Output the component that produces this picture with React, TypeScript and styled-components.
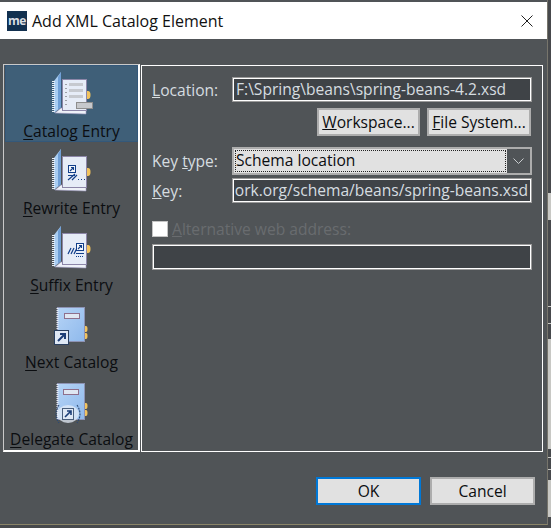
import React from "react";
import styled, { createGlobalStyle } from "styled-components";

const GlobalStyle = createGlobalStyle`
  html, body {
    margin: 0;
    padding: 0;
    background: #47494c;
  }
`;

const Frame = styled.div`
  width: 551px;
  height: 528px;
  overflow: hidden;
  display: flex;
  background: #47494c;
`;

const Backdrop = styled.div`
  width: 3px;
  flex: none;
  display: flex;
  flex-direction: column;
`;

const BackdropBand = styled.div<{ $h: number; $color: string }>`
  height: ${({ $h }) => $h}px;
  flex: none;
  background: ${({ $color }) => $color};
`;

const Window = styled.div`
  width: 548px;
  height: 525px;
  flex: none;
  box-sizing: border-box;
  display: flex;
  flex-direction: column;
  background: #505457;
  font-family: "Open Sans", "Noto Sans", sans-serif;
  font-size: 15.6px;
  border-right: 1px solid #77756c;
  border-bottom: 1px solid #8a8468;
`;

const TitleBar = styled.div`
  height: 37px;
  flex: none;
  margin-top: 2px;
  display: flex;
  align-items: center;
  background: #ffffff;
  padding: 0 0 0 7px;
  color: #111;
  font-size: 16px;
`;

const AppBadge = styled.div`
  width: 20px;
  height: 20px;
  background: #12304f;
  color: #d9dde2;
  font-size: 12px;
  font-weight: 700;
  line-height: 19px;
  text-align: center;
  letter-spacing: -0.5px;
`;

const Title = styled.div`
  margin-left: 5px;
  flex: 1;
`;

const CloseButton = styled.div`
  width: 41px;
  height: 37px;
  display: flex;
  align-items: center;
  justify-content: center;
`;

const Body = styled.div`
  flex: 1;
  display: flex;
  flex-direction: column;
  padding: 25px 4px 0 3px;
`;

const Panels = styled.div`
  display: flex;
  gap: 1px;
  height: 388px;
`;

const Sidebar = styled.div`
  width: 133px;
  border: 1px solid #c9c9c9;
  border-right: 2px solid #ffffff;
  border-bottom: 2px solid #ffffff;
  padding: 0 0 0 1px;
`;

const EntryItem = styled.div<{ $selected?: boolean }>`
  height: 77px;
  box-sizing: border-box;
  display: flex;
  flex-direction: column;
  align-items: center;
  padding-top: 5px;
  background: ${({ $selected }) => ($selected ? "#3f5f78" : "transparent")};
  box-shadow: ${({ $selected }) => ($selected ? "inset 0 0 0 1px #34587a" : "none")};
  color: #0b0d10;
  white-space: nowrap;
`;

const EntryLabel = styled.div`
  line-height: 20px;
  margin-top: 5px;
  u {
    text-underline-offset: 2px;
  }
`;

const Main = styled.div`
  flex: 1;
  margin-top: 1px;
  border: 1px solid #ffffff;
  padding: 11px 11px 0 10px;
  display: flex;
  flex-direction: column;
  color: #d6dde0;
`;

const FieldRow = styled.div`
  display: grid;
  grid-template-columns: 81px 1fr;
  align-items: center;
`;

const FieldLabel = styled.div`
  line-height: 20px;
`;

const TextInput = styled.div<{ $alignEnd?: boolean }>`
  height: 23px;
  box-sizing: border-box;
  box-shadow: 0 0 0 1px #9a9a9a;
  border: 1px solid #ffffff;
  background: #3f4347;
  line-height: 20px;
  padding: 0 2px;
  margin: 1px 0;
  color: #d6dde0;
  overflow: hidden;
  white-space: nowrap;
  display: flex;
  justify-content: ${({ $alignEnd }) => ($alignEnd ? "flex-end" : "flex-start")};
`;

const ButtonRow = styled.div`
  display: flex;
  justify-content: flex-end;
  gap: 7px;
  margin-top: 6px;
`;

const PushButton = styled.div<{ $width: number; $default?: boolean }>`
  width: ${({ $width }) => $width}px;
  height: 28px;
  box-sizing: border-box;
  background: #e1e1e1;
  border: ${({ $default }) => ($default ? "2px solid #0078d7" : "2px solid #adadad")};
  color: #0b0d10;
  line-height: 24px;
  text-align: center;
  white-space: nowrap;
`;

const ComboRow = styled(FieldRow)`
  margin-top: 11px;
`;

const ComboBox = styled.div`
  height: 28px;
  box-sizing: border-box;
  margin: 0 -1px;
  border: 2px solid #adadad;
  display: flex;
`;

const ComboValue = styled.div`
  width: 273px;
  box-sizing: border-box;
  background: #e1e1e1;
  outline: 1px dotted #222;
  outline-offset: -2px;
  color: #0b0d10;
  line-height: 23px;
  padding-left: 2px;
`;

const ComboArrow = styled.div`
  flex: 1;
  display: flex;
  align-items: center;
  justify-content: center;
`;

const KeyRow = styled(FieldRow)`
  margin-top: 3px;
`;

const CheckRow = styled.div`
  display: flex;
  align-items: center;
  margin-top: 18px;
  gap: 4px;
  height: 16px;
  color: #696c6f;
`;

const CheckBox = styled.div`
  width: 16px;
  height: 16px;
  box-sizing: border-box;
  background: #ffffff;
  border: 1px solid #c4c4c4;
`;

const WideInput = styled(TextInput)`
  height: 24px;
  margin: 8px 0 0 1px;
`;

const Footer = styled.div`
  display: flex;
  justify-content: flex-end;
  gap: 9px;
  margin-top: 25px;
  padding-right: 8px;
`;

const BookEntry = ({ children }: { children?: React.ReactNode }) => (
  <svg width="48" height="46" viewBox="0 0 48 46">
    <path d="M6 11 L13 2 L13 37 L6 43 Z" fill="#a9cdf2" />
    <path d="M10 7 L13 2 L13 37 L10 40 Z" fill="#6f9fd6" />
    <line x1="5.5" y1="11" x2="5.5" y2="43" stroke="#e8eef6" strokeWidth="3" strokeDasharray="1 1" />
    <path d="M7 43 L13 38 L38 38 L38 44 Z" fill="#eef1f8" stroke="#9e9ac0" strokeWidth="0.6" />
    <rect x="14.5" y="9.5" width="24" height="31" fill="#e6ecf7" stroke="#8c86a8" />
    <path d="M39 21 h1 a2.5 4 0 0 1 0 8 h-1 Z" fill="#f2c35e" />
    {children}
  </svg>
);

const CatalogEntryIcon = () => (
  <BookEntry>
    <line x1="18" y1="14" x2="18" y2="36" stroke="#555" strokeWidth="1" strokeDasharray="1 3" />
    <rect x="21" y="13" width="14" height="3" fill="#c6c9cf" />
    <rect x="21" y="19" width="14" height="3" fill="#c6c9cf" />
    <rect x="21" y="25" width="14" height="3" fill="#c6c9cf" />
    <rect x="28.5" y="32.5" width="16" height="6" fill="#c6c8cc" stroke="#8d8d8d" />
  </BookEntry>
);

const MiniArrow = ({ x, y }: { x: number; y: number }) => (
  <g transform={`translate(${x} ${y})`}>
    <rect x="0.5" y="0.5" width="7" height="7" fill="#f4f7fc" stroke="#123f8a" />
    <path d="M2 6 L5.5 2.5 M3 2.5 H5.5 V5" fill="none" stroke="#123f8a" strokeWidth="1.1" />
  </g>
);

const RewriteEntryIcon = () => (
  <BookEntry>
    <MiniArrow x={20} y={18} />
    <path d="M20 33 L27 27 M24 33 L29 28" stroke="#123f8a" strokeWidth="1.2" />
    <path d="M20 28.5 H27" stroke="#123f8a" strokeWidth="1" />
    <path d="M30 32.5 H37" stroke="#123f8a" strokeWidth="1" strokeDasharray="1 2" />
  </BookEntry>
);

const SuffixEntryIcon = () => (
  <BookEntry>
    <path d="M20 30 L23 24 M23 30 L26 24 M26 30 L29 24" stroke="#123f8a" strokeWidth="1.2" />
    <MiniArrow x={28} y={19} />
    <path d="M28 29.5 H36" stroke="#123f8a" strokeWidth="1" />
    <path d="M28 32.5 H36" stroke="#123f8a" strokeWidth="1" strokeDasharray="1 1" />
  </BookEntry>
);

const BookGradient = () => (
  <defs>
    <linearGradient id="bookFill" x1="0" y1="0" x2="1" y2="1">
      <stop offset="0" stopColor="#b6d4f6" />
      <stop offset="1" stopColor="#8fb9ec" />
    </linearGradient>
  </defs>
);

const NextCatalogIcon = () => (
  <svg width="48" height="46" viewBox="0 0 48 46">
    <BookGradient />
    <rect x="9.5" y="6.5" width="27" height="34" fill="url(#bookFill)" stroke="#8d93b4" />
    <line x1="9.5" y1="7" x2="9.5" y2="40" stroke="#e8eef6" strokeWidth="2" strokeDasharray="1 1" />
    <rect x="16.5" y="12.5" width="15" height="5" fill="#dfe6f2" stroke="#8e6f8c" />
    <path d="M37 25 h1 a1.5 3 0 0 1 0 6 h-1 Z M37 32 h1 a1.5 3 0 0 1 0 6 h-1 Z" fill="#f2c35e" />
    <rect x="6.5" y="29.5" width="14" height="14" fill="#dfe8f5" stroke="#2a3f5f" />
    <path d="M10 40 L17 33 M12 33 H17 V38" fill="none" stroke="#1d3f78" strokeWidth="2" />
  </svg>
);

const DelegateCatalogIcon = () => (
  <svg width="48" height="46" viewBox="0 0 48 46">
    <BookGradient />
    <rect x="9.5" y="5.5" width="27" height="36" fill="url(#bookFill)" stroke="#8d93b4" />
    <line x1="9.5" y1="6" x2="9.5" y2="41" stroke="#e8eef6" strokeWidth="2" strokeDasharray="1 1" />
    <rect x="15.5" y="11.5" width="15" height="5" fill="#dfe6f2" stroke="#8e6f8c" />
    <path d="M37 25 h1 a1.5 3 0 0 1 0 6 h-1 Z M37 32 h1 a1.5 3 0 0 1 0 6 h-1 Z" fill="#f2c35e" />
    <ellipse cx="20" cy="36" rx="11" ry="9" fill="#e4ecf7" opacity="0.75" />
    <path d="M11 27 Q5 36 11 45 M29 27 Q35 36 29 45" fill="none" stroke="#2c4a72" strokeWidth="1.1" strokeDasharray="2 1" />
    <rect x="14.5" y="30.5" width="11" height="11" fill="#dfe8f5" stroke="#4a5f7c" />
    <path d="M17 39 L23 33 M19 33 H23 V37" fill="none" stroke="#1d3f78" strokeWidth="1.6" />
  </svg>
);

const entries = [
  { first: "C", rest: "atalog Entry", Icon: CatalogEntryIcon, selected: true },
  { first: "R", rest: "ewrite Entry", Icon: RewriteEntryIcon },
  { first: "S", rest: "uffix Entry", Icon: SuffixEntryIcon },
  { first: "N", rest: "ext Catalog", Icon: NextCatalogIcon },
  { first: "D", rest: "elegate Catalog", Icon: DelegateCatalogIcon },
];

// what shows of the window behind the dialog, down the right edge
const backdropBands = [
  { h: 193, color: "#47494c" },
  { h: 27, color: "#c8c8c4" },
  { h: 86, color: "#47494c" },
  { h: 1, color: "#c8c8c4" },
  { h: 16, color: "#47494c" },
  { h: 1, color: "#c8c8c4" },
  { h: 15, color: "#47494c" },
  { h: 110, color: "#c8c8c4" },
  { h: 8, color: "#47494c" },
  { h: 1, color: "#c8c8c4" },
  { h: 11, color: "#47494c" },
  { h: 1, color: "#c8c8c4" },
  { h: 10, color: "#47494c" },
  { h: 37, color: "#c8c8c4" },
];

export default function App() {
  return (
    <>
      <GlobalStyle />
      <Frame>
        <Window>
          <TitleBar>
            <AppBadge>me</AppBadge>
            <Title>Add XML Catalog Element</Title>
            <CloseButton>
              <svg width="12" height="12" viewBox="0 0 12 12">
                <path d="M0.5 0.5 L11.5 11.5 M11.5 0.5 L0.5 11.5" stroke="#222" strokeWidth="1" />
              </svg>
            </CloseButton>
          </TitleBar>
          <Body>
            <Panels>
              <Sidebar>
                {entries.map(({ first, rest, Icon, selected }) => (
                  <EntryItem key={first} $selected={selected}>
                    <Icon />
                    <EntryLabel>
                      <u>{first}</u>
                      {rest}
                    </EntryLabel>
                  </EntryItem>
                ))}
              </Sidebar>
              <Main>
                <FieldRow>
                  <FieldLabel>
                    <u>L</u>ocation:
                  </FieldLabel>
                  <TextInput>F:\Spring\beans\spring-beans-4.2.xsd</TextInput>
                </FieldRow>
                <ButtonRow>
                  <PushButton $width={103}>
                    <u>W</u>orkspace...
                  </PushButton>
                  <PushButton $width={104}>
                    <u>F</u>ile System...
                  </PushButton>
                </ButtonRow>
                <ComboRow>
                  <FieldLabel>
                    Key <u>t</u>ype:
                  </FieldLabel>
                  <ComboBox>
                    <ComboValue>Schema location</ComboValue>
                    <ComboArrow>
                      <svg width="11" height="6" viewBox="0 0 11 6">
                        <path d="M0.5 0.5 L5.5 5.5 L10.5 0.5" fill="none" stroke="#c8ccce" strokeWidth="1" />
                      </svg>
                    </ComboArrow>
                  </ComboBox>
                </ComboRow>
                <KeyRow>
                  <FieldLabel>
                    <u>K</u>ey:
                  </FieldLabel>
                  <TextInput $alignEnd>ork.org/schema/beans/spring-beans.xsd</TextInput>
                </KeyRow>
                <CheckRow>
                  <CheckBox />
                  <span>
                    <u>A</u>lternative web address:
                  </span>
                </CheckRow>
                <WideInput />
              </Main>
            </Panels>
            <Footer>
              <PushButton $width={105} $default>
                OK
              </PushButton>
              <PushButton $width={105}>Cancel</PushButton>
            </Footer>
          </Body>
        </Window>
        <Backdrop>
          {backdropBands.map((band, i) => (
            <BackdropBand key={i} $h={band.h} $color={band.color} />
          ))}
        </Backdrop>
      </Frame>
    </>
  );
}
